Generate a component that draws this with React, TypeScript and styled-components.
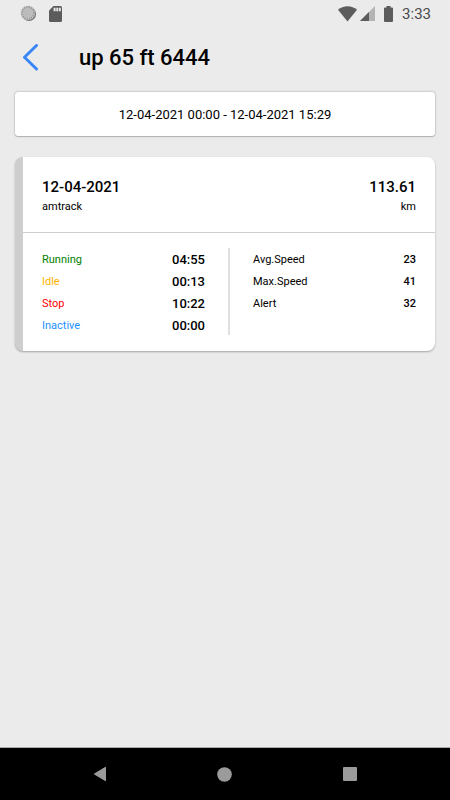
import React from "react";
import styled, { createGlobalStyle } from "styled-components";

const GlobalStyle = createGlobalStyle`
  *, *::before, *::after { box-sizing: border-box; }
  body {
    margin: 0;
    background: #ebebeb;
    color: #000;
    font-family: Roboto, "Liberation Sans", sans-serif;
  }
  button { font: inherit; color: inherit; cursor: pointer; }
`;

const Screen = styled.div`
  display: flex;
  flex-direction: column;
  min-height: 100vh;
`;

const StatusBar = styled.div`
  display: flex;
  align-items: center;
  justify-content: space-between;
  height: 27px;
  padding: 0 19px 0 20px;
`;

const StatusGroup = styled.div<{ $gap: number }>`
  display: flex;
  align-items: center;
  gap: ${(p) => p.$gap}px;
`;

const Clock = styled.time`
  font-size: 15px;
  line-height: 20px;
  color: #4a4a4a;
`;

const Header = styled.header`
  display: flex;
  align-items: center;
  gap: 37px;
  height: 61px;
  padding: 0 20px;
`;

const BackButton = styled.button`
  display: flex;
  padding: 0;
  border: 0;
  background: none;
`;

const Title = styled.h1`
  margin: 0;
  font-size: 22px;
  line-height: 28px;
  font-weight: 500;
`;

const Content = styled.main`
  display: flex;
  flex: 1;
  flex-direction: column;
  gap: 21px;
  padding: 4px 15px 20px;
`;

const RangeButton = styled.button`
  height: 44px;
  padding: 2px 0 0;
  border: 0;
  border-radius: 3px;
  background: #fff;
  box-shadow: 0 0 2px rgba(0, 0, 0, 0.4), 0 1px 1px rgba(0, 0, 0, 0.15);
  font-size: 13px;
  line-height: 20px;
`;

const Card = styled.article`
  overflow: hidden;
  border-left: 8px solid #cecece;
  border-radius: 8px;
  background: #fff;
  box-shadow: 0 1px 2px rgba(0, 0, 0, 0.3);
`;

const Summary = styled.div`
  display: flex;
  justify-content: space-between;
  height: 76px;
  padding: 20px 19px 0;
  border-bottom: 1px solid #cecece;
`;

const SummaryBlock = styled.div<{ $end?: boolean }>`
  text-align: ${(p) => (p.$end ? "right" : "left")};
`;

const Headline = styled.h2`
  margin: 0;
  font-size: 15px;
  line-height: 20px;
  font-weight: 500;
`;

const Caption = styled.p`
  margin: 0;
  font-size: 11px;
  line-height: 20px;
`;

const Stats = styled.div`
  display: grid;
  grid-template-columns: 1fr 2px 1fr;
  gap: 23px;
  padding: 15px 19px 14px;
`;

const StatList = styled.dl`
  margin: 0;
  padding-top: 1px;
`;

const StatRow = styled.div`
  display: flex;
  align-items: center;
  justify-content: space-between;
  height: 22px;
`;

const StatLabel = styled.dt<{ $color?: string }>`
  font-size: 11px;
  line-height: 18px;
  color: ${(p) => p.$color ?? "#000"};
`;

const StatValue = styled.dd<{ $small?: boolean }>`
  margin: 0;
  font-size: ${(p) => (p.$small ? 11 : 13)}px;
  line-height: 18px;
  font-weight: 500;
`;

const Divider = styled.div`
  margin-bottom: 2px;
  background: #e0e0e0;
`;

const NavBar = styled.nav`
  display: grid;
  grid-template-columns: repeat(3, 1fr);
  height: 53px;
  padding: 0 38px;
  border-top: 1px solid #aaa;
  background: #000;
`;

const NavButton = styled.button`
  display: flex;
  align-items: center;
  justify-content: center;
  padding: 0;
  border: 0;
  background: none;
`;

const durations = [
  { label: "Running", value: "04:55", color: "#008000" },
  { label: "Idle", value: "00:13", color: "#ffb300" },
  { label: "Stop", value: "10:22", color: "#ff0000" },
  { label: "Inactive", value: "00:00", color: "#1e90ff" },
];

const figures = [
  { label: "Avg.Speed", value: "23" },
  { label: "Max.Speed", value: "41" },
  { label: "Alert", value: "32" },
];

const SyncIcon = () => (
  <svg width="17" height="17" viewBox="0 0 17 17" aria-hidden="true">
    <circle cx="9" cy="9" r="7" fill="#6a6a6a" />
    <circle cx="8" cy="8" r="7.3" fill="#bcbcbc" />
    <circle cx="8" cy="8" r="6" fill="none" stroke="#8a8a8a" strokeWidth="1.4" strokeDasharray="1 1.36" />
  </svg>
);

const SdCardIcon = () => (
  <svg width="13" height="16" viewBox="0 0 13 16" aria-hidden="true">
    <path d="M4.5 0H11.5Q13 0 13 1.5V14.5Q13 16 11.5 16H1.5Q0 16 0 14.5V4.5Z" fill="#5c5c5c" />
    <path d="M4.6 1.8h2v3.4h-2zM7.3 1.8h1.9v3.4H7.3zM9.9 1.8h1.9v3.4H9.9z" fill="#ebebeb" />
  </svg>
);

const WifiIcon = () => (
  <svg width="19" height="16" viewBox="0 0 19 16" aria-hidden="true">
    <path d="M9.5 15.5L0 3.7Q4 .2 9.5 .2T19 3.7Z" fill="#5c5c5c" />
  </svg>
);

const SignalIcon = () => (
  <svg width="15" height="15" viewBox="0 0 15 15" aria-hidden="true">
    <path d="M15 0V15H0Z" fill="#b4b4b4" />
    <path d="M9 6V15H0Z" fill="#5c5c5c" />
  </svg>
);

const BatteryIcon = () => (
  <svg width="9" height="16" viewBox="0 0 9 16" aria-hidden="true">
    <path d="M2.5 0h4v1.5H8Q9 1.5 9 2.5V15Q9 16 8 16H1Q0 16 0 15V2.5Q0 1.5 1 1.5h1.5Z" fill="#5c5c5c" />
  </svg>
);

const BackIcon = () => (
  <svg width="22" height="28" viewBox="0 0 22 28" aria-hidden="true">
    <path
      d="M16.5 1.5L4.5 13.3L16.5 25"
      fill="none"
      stroke="#3b86f7"
      strokeWidth="3"
      strokeLinecap="round"
      strokeLinejoin="round"
    />
  </svg>
);

export default function App() {
  return (
    <Screen>
      <GlobalStyle />
      <StatusBar>
        <StatusGroup $gap={12}>
          <SyncIcon />
          <SdCardIcon />
        </StatusGroup>
        <StatusGroup $gap={9}>
          <StatusGroup $gap={3}>
            <WifiIcon />
            <SignalIcon />
          </StatusGroup>
          <BatteryIcon />
          <Clock>3:33</Clock>
        </StatusGroup>
      </StatusBar>

      <Header>
        <BackButton type="button" aria-label="Back">
          <BackIcon />
        </BackButton>
        <Title>up 65 ft 6444</Title>
      </Header>

      <Content>
        <RangeButton type="button">12-04-2021 00:00 - 12-04-2021 15:29</RangeButton>

        <Card>
          <Summary>
            <SummaryBlock>
              <Headline>12-04-2021</Headline>
              <Caption>amtrack</Caption>
            </SummaryBlock>
            <SummaryBlock $end>
              <Headline>113.61</Headline>
              <Caption>km</Caption>
            </SummaryBlock>
          </Summary>
          <Stats>
            <StatList>
              {durations.map((row) => (
                <StatRow key={row.label}>
                  <StatLabel $color={row.color}>{row.label}</StatLabel>
                  <StatValue>{row.value}</StatValue>
                </StatRow>
              ))}
            </StatList>
            <Divider />
            <StatList>
              {figures.map((row) => (
                <StatRow key={row.label}>
                  <StatLabel>{row.label}</StatLabel>
                  <StatValue $small>{row.value}</StatValue>
                </StatRow>
              ))}
            </StatList>
          </Stats>
        </Card>
      </Content>

      <NavBar aria-label="System">
        <NavButton type="button" aria-label="Back">
          <svg width="14" height="16" viewBox="0 0 14 16" aria-hidden="true">
            <path d="M12.5 1.3V14.7L1.3 8Z" fill="#9b9b9b" stroke="#9b9b9b" strokeLinejoin="round" />
          </svg>
        </NavButton>
        <NavButton type="button" aria-label="Home">
          <svg width="15" height="15" viewBox="0 0 15 15" aria-hidden="true">
            <circle cx="7.5" cy="7.5" r="7.3" fill="#9b9b9b" />
          </svg>
        </NavButton>
        <NavButton type="button" aria-label="Recent apps">
          <svg width="14" height="14" viewBox="0 0 14 14" aria-hidden="true">
            <rect width="14" height="14" rx="1" fill="#9b9b9b" />
          </svg>
        </NavButton>
      </NavBar>
    </Screen>
  );
}
